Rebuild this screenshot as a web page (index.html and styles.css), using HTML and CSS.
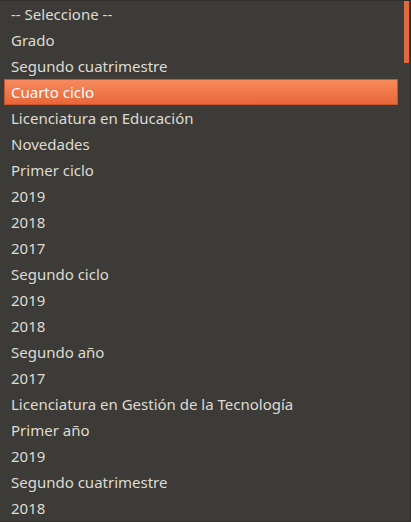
FILE: index.html
```html
<!DOCTYPE html>
<html>
<head>
<meta charset="utf-8">
<link rel="stylesheet" href="styles.css">
</head>
<body>
<div class="menu">
  <ul class="list">
    <li class="item">-- Seleccione --</li>
    <li class="item">Grado</li>
    <li class="item">Segundo cuatrimestre</li>
    <li class="item active">Cuarto ciclo</li>
    <li class="item">Licenciatura en Educación</li>
    <li class="item">Novedades</li>
    <li class="item">Primer ciclo</li>
    <li class="item">2019</li>
    <li class="item">2018</li>
    <li class="item">2017</li>
    <li class="item">Segundo ciclo</li>
    <li class="item">2019</li>
    <li class="item">2018</li>
    <li class="item">Segundo año</li>
    <li class="item">2017</li>
    <li class="item">Licenciatura en Gestión de la Tecnología</li>
    <li class="item">Primer año</li>
    <li class="item">2019</li>
    <li class="item">Segundo cuatrimestre</li>
    <li class="item">2018</li>
  </ul>
  <div class="scroll"><div class="thumb"></div></div>
</div>
</body>
</html>
```
FILE: styles.css
```css
html, body {
  margin: 0;
  padding: 0;
  background: #3c3b37;
}
.menu {
  width: 411px;
  height: 522px;
  box-sizing: border-box;
  border-top: 1px solid #2f2e2b;
  border-bottom: 1px solid #2f2e2b;
  border-right: 1px solid #2f2e2b;
  background: #3c3b37;
  display: flex;
  overflow: hidden;
}
.list {
  list-style: none;
  margin: 0;
  padding: 0 6px 0 4px;
  flex: 1;
}
.item {
  height: 26px;
  box-sizing: border-box;
  padding-left: 7px;
  display: flex;
  align-items: center;
  font-family: "Noto Sans", "DejaVu Sans", sans-serif;
  font-size: 15px;
  color: #dfdbd2;
  white-space: nowrap;
}
.item.active {
  color: #ffffff;
  background: linear-gradient(#f68a5c, #e8663a);
  border: 1px solid #c9552c;
  padding-left: 6px;
}
.scroll {
  width: 5px;
  margin-right: 1px;
}
.thumb {
  height: 62px;
  background: #df6a3d;
}
```
